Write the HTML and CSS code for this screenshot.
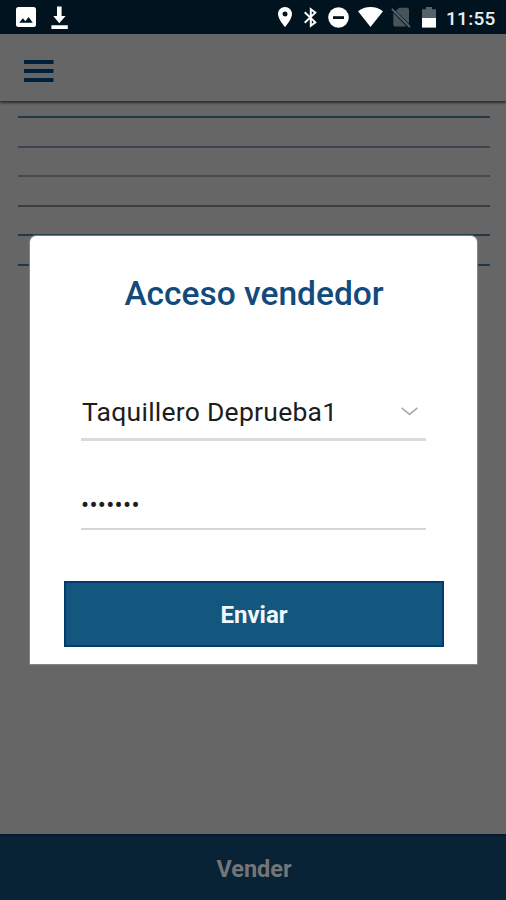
FILE: index.html
```html
<!DOCTYPE html>
<html lang="es">
<head>
<meta charset="utf-8">
<meta name="viewport" content="width=device-width, initial-scale=1">
<title>Acceso vendedor</title>
<link rel="stylesheet" href="styles.css">
</head>
<body>
<div class="screen">
  <div class="status">
    <svg class="ic-image" width="20" height="20" viewBox="0 0 20 20"><rect width="20" height="20" rx="2.5" fill="#fff"/><path d="M3.3 15.8 6.9 11.3 9.4 14.2 12.6 9.9 16.8 15.8Z" fill="#00131e"/></svg>
    <svg class="ic-down" width="17" height="24" viewBox="0 0 17 24" fill="#fff"><path d="M6 0.5h4.600v9.500h4L8.300 17.200 2.300 10H6ZM.4 19.300h16.400v3.600H.4Z"/></svg>
    <span class="spacer"></span>
    <svg class="ic-pin" width="14" height="20" viewBox="0 0 14 20"><path fill="#fff" fill-rule="evenodd" d="M7 0C3.100 0 0 3.100 0 7c0 5.200 7 13 7 13s7-7.800 7-13c0-3.900-3.100-7-7-7Zm0 4.500a2.500 2.500 0 1 1 0 5 2.500 2.500 0 0 1 0-5Z"/></svg>
    <svg class="ic-bt" width="14" height="21" viewBox="0 0 14 21" fill="none" stroke="#fff" stroke-width="2"><path d="M1.700 5.200 12.300 15.300 7.800 18.800V2.200l4.500 3.500L1.700 15.800"/></svg>
    <svg class="ic-dnd" width="21" height="21" viewBox="0 0 21 21"><circle cx="10.500" cy="10.500" r="10.300" fill="#fff"/><path d="M5 9.200h11v2.800H5Z" fill="#00131e"/></svg>
    <svg class="ic-wifi" width="25" height="20" viewBox="0 0 25 20"><path d="M12.500 20 0 4.300C3.500 1.500 7.800 0 12.500 0S21.500 1.500 25 4.300Z" fill="#fff"/></svg>
    <svg class="ic-sim" width="20" height="21" viewBox="0 0 20 21"><path d="M8 .8h8q2 0 2 2v13.900L4.900 3.900ZM2.300 5.800 15.600 19.500H4.300q-2 0-2-2Z" fill="#48545b"/><path d="M.8 1.800 18.900 20" stroke="#59646b" stroke-width="1.900"/></svg>
    <svg class="ic-bat" width="14" height="21" viewBox="0 0 14 21"><path d="M4 0h6v2.200h4V11H0V2.200h4Z" fill="#56626a"/><path d="M0 11h14v9.600H0Z" fill="#fff"/></svg>
    <span class="clock">11:55</span>
  </div>
  <header class="topbar">
    <svg width="30" height="22" viewBox="0 0 30 22" fill="#00203c"><path d="M0 0h29.500v4H0ZM0 9h29.500v4H0ZM0 18h29.500v4H0Z"/></svg>
  </header>
  <main class="list">
    <div class="row navy"></div>
    <div class="row slate"></div>
    <div class="row grey"></div>
    <div class="row dark"></div>
    <div class="row navy"></div>
    <div class="row navy"></div>
  </main>
  <footer class="footer"><span class="vender">Vender</span></footer>

  <form class="modal">
    <h1 class="title"><span>Acceso vendedor</span></h1>
    <div class="field select">
      <span class="value">Taquillero Deprueba1</span>
      <svg width="17" height="9" viewBox="0 0 17 9" fill="none" stroke="#adadad" stroke-width="1.700"><path d="M.6.9 8.500 7.300 16.400.9"/></svg>
    </div>
    <div class="field password"><span class="dots">•••••••</span></div>
    <button class="send" type="button"><span>Enviar</span></button>
  </form>
</div>
</body>
</html>
```
FILE: styles.css
```css
* { box-sizing: border-box; }
body { margin: 0; background: #666; font-family: Roboto, "Liberation Sans", sans-serif; }
svg { display: block; flex: none; }
.screen { position: relative; width: 506px; height: 900px; display: flex; flex-direction: column; overflow: hidden; background: #666; }
.status { height: 34px; flex: none; display: flex; align-items: flex-start; padding: 7px 11px 0 16px; background: #00131e; border-bottom: 1px solid #0e0e25; }
.ic-down { margin: -1px 0 0 15px; }
.spacer { flex: 1; }
.ic-bt { margin-left: 11px; }
.ic-dnd { margin-left: 11px; }
.ic-wifi { margin-left: 9px; }
.ic-sim { margin-left: 8px; }
.ic-bat { margin-left: 11px; }
.clock { margin-left: 10px; width: 49px; color: #e9edef; font-size: 19px; line-height: 23px; font-weight: 500; letter-spacing: .3px; white-space: nowrap; }
.topbar { height: 67px; flex: none; padding: 26px 24px 0; background: #666; box-shadow: 0 2px 2px #2d3030; z-index: 1; }
.list { flex: 1; padding: 15px 16px 0 18px; }
.row { height: 29.6px; border-top: 2px solid; }
.navy { border-color: #203746; }
.slate { border-color: #3d444f; }
.grey { border-color: #484a4b; }
.dark { border-color: #3a3e42; }
.footer { height: 66px; flex: none; display: flex; justify-content: center; padding: 19px 0 0 2px; background: #082335; border-top: 2px solid #08182f; color: #737577; font-size: 23.5px; line-height: 28px; font-weight: 700; }
.modal { position: absolute; left: 30px; top: 236px; width: 447px; height: 428px; padding: 0 34px; background: #fff; border-radius: 6px 6px 0 0; box-shadow: 0 0 1px 1px #888, 0 -1px 0 #15171a; }
.title { margin: 37px 0 0; padding-left: 1px; text-align: center; color: #124a7b; font-size: 33.5px; line-height: 42px; font-weight: 500; letter-spacing: 0; white-space: nowrap; }
.field { margin: 0 17px; display: flex; border-bottom: 2px solid #d5d5d5; color: #1d1d1d; }
.select { height: 61px; margin-top: 65px; padding: 15px 8px 0 1px; justify-content: space-between; border-bottom: 3px solid #dadada; }
.value { font-size: 26.5px; line-height: 33px; letter-spacing: .25px; white-space: nowrap; }
.select svg { margin-top: 12px; }
.password { height: 89px; padding: 47px 0 0; }
.dots { font-size: 24px; line-height: 34px; letter-spacing: .3px; white-space: nowrap; }
.send { display: block; width: 380px; height: 66px; margin-top: 51px; padding: 2px 0 0; background: #13577f; border: 2px solid #033a70; color: #f2f7fb; font: 700 24px/28px Roboto, "Liberation Sans", sans-serif; }
```
